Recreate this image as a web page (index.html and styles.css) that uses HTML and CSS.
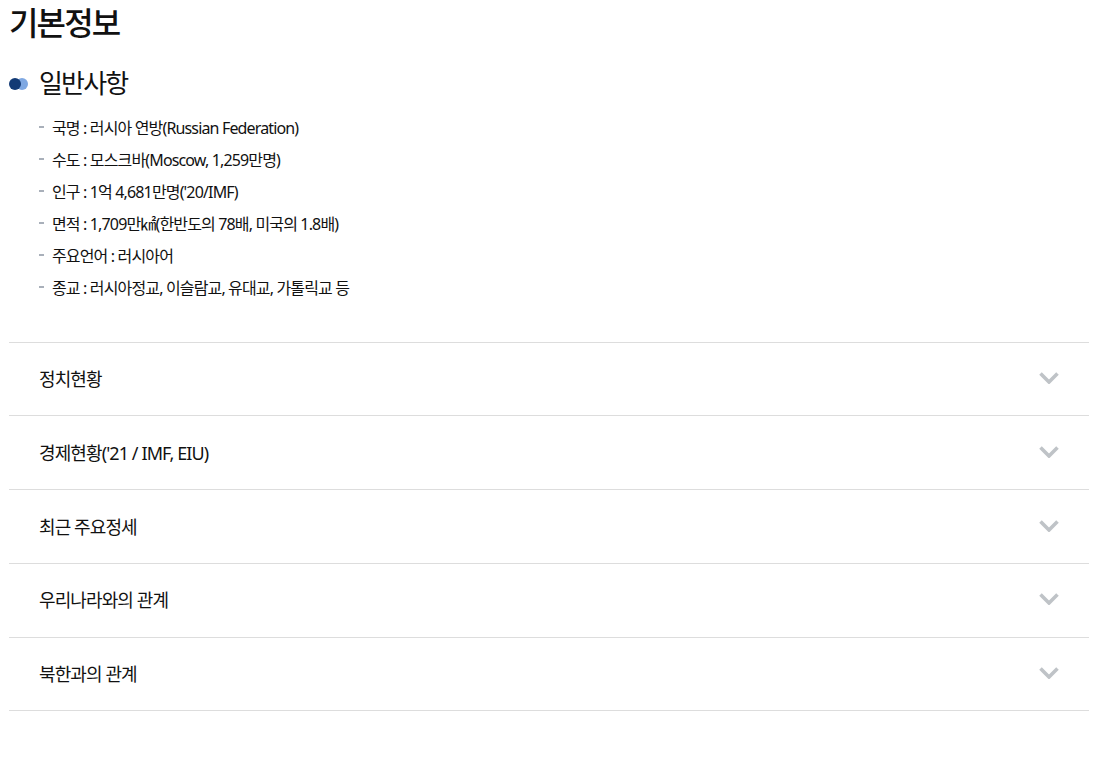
FILE: index.html
```html
<!DOCTYPE html>
<html lang="ko">
<head>
<meta charset="UTF-8" />
<meta name="viewport" content="width=device-width, initial-scale=1" />
<title>기본정보</title>
<link rel="stylesheet" href="styles.css">
</head>
<body>
  <h2 class="page-title">기본정보</h2>

  <div class="section-head">
    <span class="dots"><i class="dot-light"></i><i class="dot-dark"></i></span>
    <h3 class="section-title">일반사항</h3>
  </div>

  <ul class="info-list">
    <li>국명 : 러시아 연방(Russian Federation)</li>
    <li>수도 : 모스크바(Moscow, 1,259만명)</li>
    <li>인구 : 1억 4,681만명('20/IMF)</li>
    <li>면적 : 1,709만㎢(한반도의 78배, 미국의 1.8배)</li>
    <li>주요언어 : 러시아어</li>
    <li>종교 : 러시아정교, 이슬람교, 유대교, 가톨릭교 등</li>
  </ul>

  <div class="accordion">
    <div class="acc-row">
      <span>정치현황</span>
      <svg class="chevron" viewBox="0 0 20 12"><path d="M1.5 1.5 10 10l8.5-8.5" /></svg>
    </div>
    <div class="acc-row">
      <span>경제현황('21 / IMF, EIU)</span>
      <svg class="chevron" viewBox="0 0 20 12"><path d="M1.5 1.5 10 10l8.5-8.5" /></svg>
    </div>
    <div class="acc-row">
      <span>최근 주요정세</span>
      <svg class="chevron" viewBox="0 0 20 12"><path d="M1.5 1.5 10 10l8.5-8.5" /></svg>
    </div>
    <div class="acc-row">
      <span>우리나라와의 관계</span>
      <svg class="chevron" viewBox="0 0 20 12"><path d="M1.5 1.5 10 10l8.5-8.5" /></svg>
    </div>
    <div class="acc-row">
      <span>북한과의 관계</span>
      <svg class="chevron" viewBox="0 0 20 12"><path d="M1.5 1.5 10 10l8.5-8.5" /></svg>
    </div>
  </div>
</body>
</html>
```

FILE: styles.css
```css
body {
  margin: 0;
  padding: 0 30px 0 9px;
  background: #fff;
  color: #111;
  font-family: "Noto Sans", "Noto Sans CJK KR", sans-serif;
}

/* Title */
.page-title {
  margin: 0;
  height: 46px;
  font-size: 32px;
  line-height: 46px;
  font-weight: 500;
  letter-spacing: -1.85px;
}

.section-head {
  display: flex;
  align-items: center;
  height: 36px;
  margin-top: 19px;
}

.dots {
  position: relative;
  display: block;
  width: 19px;
  height: 12px;
  margin-right: 11px;
}

.dots i {
  position: absolute;
  top: 1px;
  width: 12px;
  height: 12px;
  border-radius: 50%;
}

.dot-light {
  left: 7px;
  background: #7fa8e2;
}

.dot-dark {
  left: 0;
  background: #123a75;
}

.section-title {
  margin: 0;
  font-size: 26px;
  line-height: 36px;
  font-weight: 400;
  letter-spacing: -1.85px;
}

/* General info list */
.info-list {
  margin: 11px 0 0;
  padding: 0 0 0 30px;
  list-style: none;
}

.info-list li {
  position: relative;
  height: 32px;
  padding-left: 13px;
  font-size: 16px;
  line-height: 32px;
  letter-spacing: -0.85px;
}

.info-list li::before {
  content: "";
  position: absolute;
  left: 0;
  top: 14px;
  width: 5px;
  height: 2px;
  background: #a9b0ba;
}

/* Collapsed sections */
.accordion {
  margin-top: 37.6px;
  border-top: 1px solid #ddd;
}

.acc-row {
  display: flex;
  align-items: center;
  justify-content: space-between;
  height: 71.15px;
  padding: 0 30px 1.6px;
  border-bottom: 1px solid #ddd;
  font-size: 18px;
  letter-spacing: -0.9px;
}

.chevron {
  width: 20px;
  height: 12px;
  fill: none;
  stroke: #bfc3c7;
  stroke-width: 3.6;
}
```
